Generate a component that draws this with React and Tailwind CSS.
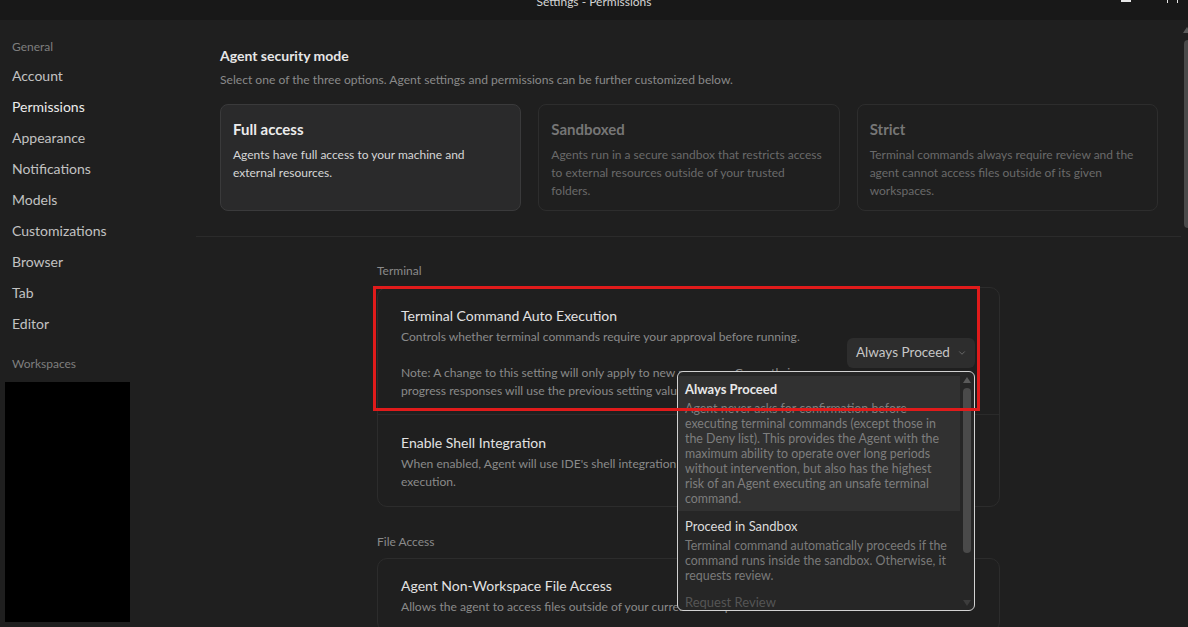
import React from 'react';
import { ChevronDown } from 'lucide-react';

const navItems = ['Account', 'Permissions', 'Appearance', 'Notifications', 'Models', 'Customizations', 'Browser', 'Tab', 'Editor'];

function ModeCard({ title, lines, active }) {
  return (
    <div
      className={
        active
          ? 'h-[107px] rounded-[8px] border border-[#3a3a3b] bg-[#2a2a2b] px-[12px] pt-[13px]'
          : 'h-[107px] rounded-[8px] border border-[#2d2d2d] px-[12px] pt-[13px]'
      }
    >
      <div className={active ? 'text-[15px] leading-[22px] font-bold text-[#ececec]' : 'text-[15px] leading-[22px] font-bold text-[#767676]'}>
        {title}
      </div>
      <div className={active ? 'mt-[6px] text-[12px] leading-[18px] text-[#d6d6d6]' : 'mt-[6px] text-[12px] leading-[18px] text-[#6a6a6a]'}>
        {lines.map((l) => (
          <div key={l} className="whitespace-nowrap">{l}</div>
        ))}
      </div>
    </div>
  );
}

export default function App() {
  return (
    <div className="relative flex h-[627px] w-[1188px] flex-col overflow-hidden bg-[#1f1f1f] font-[Lato,'Noto_Sans',sans-serif]">
      {/* title bar */}
      <div className="relative flex h-[20px] shrink-0 justify-center bg-[#181818]">
        <div className="-mt-[5px] text-[12px] leading-[14px] text-[#d4d4d4]">Settings - Permissions</div>
        <div className="absolute left-[1121px] top-0 h-[2px] w-[10px] bg-[#e6e6e6]" />
        <div className="absolute left-[1167px] top-0 h-[3px] w-px bg-[#e6e6e6]" />
        <div className="absolute left-[1177px] top-0 h-[3px] w-px bg-[#e6e6e6]" />
      </div>

      <div className="flex min-h-0 flex-1">
        {/* sidebar */}
        <div className="w-[196px] shrink-0 pt-[18px]">
          <div className="pl-[12px] text-[12px] leading-[18px] text-[#7e7e7e]">General</div>
          <div className="mt-[4px]">
            {navItems.map((n) => (
              <div
                key={n}
                className={
                  n === 'Permissions'
                    ? 'flex h-[31px] items-center pl-[12px] text-[14px] text-[#ececec]'
                    : 'flex h-[31px] items-center pl-[12px] text-[14px] text-[#c2c2c2]'
                }
              >
                {n}
              </div>
            ))}
          </div>
          <div className="mt-[16px] pl-[12px] text-[12px] leading-[18px] text-[#7e7e7e]">Workspaces</div>
          <div className="ml-[5px] mt-[9px] h-[240px] w-[125px] bg-black" />
        </div>

        {/* main */}
        <div className="relative min-w-0 flex-1 overflow-hidden">
          <div className="pr-[7px]">
            <div className="pl-[24px] pr-[23px] pt-[26px]">
              <div className="text-[14px] leading-[20px] font-bold text-[#e6e6e6]">Agent security mode</div>
              <div className="mt-[5px] whitespace-nowrap text-[12.1px] leading-[18px] text-[#8a8a8a]">
                Select one of the three options. Agent settings and permissions can be further customized below.
              </div>
              <div className="mt-[15px] grid grid-cols-3 gap-[17px]">
                <ModeCard active title="Full access" lines={['Agents have full access to your machine and', 'external resources.']} />
                <ModeCard
                  title="Sandboxed"
                  lines={['Agents run in a secure sandbox that restricts access', 'to external resources outside of your trusted', 'folders.']}
                />
                <ModeCard
                  title="Strict"
                  lines={['Terminal commands always require review and the', 'agent cannot access files outside of its given', 'workspaces.']}
                />
              </div>
            </div>
            <div className="mt-[25px] h-px bg-[#2b2b2b]" />

            <div className="mx-auto w-[623px] pt-[25px]">
              <div className="text-[12px] leading-[18px] text-[#8a8a8a]">Terminal</div>
              <div className="relative mt-[7px] rounded-[10px] border border-[#2c2c2c]">
                <div className="flex items-center justify-between border-b border-[#2a2a2a] pb-[14px] pl-[23px] pr-[24px] pt-[18px]">
                  <div>
                    <div className="text-[14px] leading-[20px] text-[#e2e2e2]">Terminal Command Auto Execution</div>
                    <div className="mt-[2px] whitespace-nowrap text-[12.1px] leading-[18px] text-[#8a8a8a]">
                      <div>Controls whether terminal commands require your approval before running.</div>
                      <div className="h-[18px]" />
                      <div>Note: A change to this setting will only apply to new messages. Currently in-</div>
                      <div>progress responses will use the previous setting value.</div>
                    </div>
                  </div>
                  <div className="-mt-[1px] flex h-[30px] w-[128px] shrink-0 items-center justify-between rounded-[6px] bg-[#2d2d2d] pl-[9px] pr-[8px]">
                    <span className="text-[13.5px] text-[#c6c6c6]">Always Proceed</span>
                    <ChevronDown size={10} strokeWidth={1.5} className="text-[#8a8a8a]" />
                  </div>
                </div>
                <div className="pb-[15px] pl-[23px] pr-[24px] pt-[18px]">
                  <div className="text-[14px] leading-[20px] text-[#e2e2e2]">Enable Shell Integration</div>
                  <div className="mt-[2px] whitespace-nowrap text-[12.1px] leading-[18px] text-[#8a8a8a]">
                    <div>When enabled, Agent will use IDE's shell integration for terminal command</div>
                    <div>execution.</div>
                  </div>
                </div>

                {/* dropdown menu */}
                <div className="absolute left-[299px] top-[83px] z-20 h-[240px] w-[298px] overflow-hidden rounded-[6px] border border-[#d2d2d2] bg-[#262626]">
                  <div className="pt-[4px]">
                    <div className="w-[282px] bg-[#313131] pb-[5px] pl-[7px] pt-[4px]">
                      <div className="text-[13px] leading-[18px] font-bold text-[#e8e8e8]">Always Proceed</div>
                      <div className="mt-[3px] whitespace-nowrap text-[12.4px] leading-[15px] text-[#7e7e7e]">
                        <div>Agent never asks for confirmation before</div>
                        <div>executing terminal commands (except those in</div>
                        <div>the Deny list). This provides the Agent with the</div>
                        <div>maximum ability to operate over long periods</div>
                        <div>without intervention, but also has the highest</div>
                        <div>risk of an Agent executing an unsafe terminal</div>
                        <div>command.</div>
                      </div>
                    </div>
                    <div className="w-[282px] pb-[4px] pl-[7px] pt-[6px]">
                      <div className="text-[13px] leading-[18px] text-[#dcdcdc]">Proceed in Sandbox</div>
                      <div className="mt-[3px] whitespace-nowrap text-[12.4px] leading-[15px] text-[#7a7a7a]">
                        <div>Terminal command automatically proceeds if the</div>
                        <div>command runs inside the sandbox. Otherwise, it</div>
                        <div>requests review.</div>
                      </div>
                    </div>
                    <div className="w-[282px] pl-[7px] pt-[6px]">
                      <div className="text-[13px] leading-[18px] text-[#555555]">Request Review</div>
                    </div>
                  </div>
                  {/* menu scrollbar */}
                  <div className="absolute left-[285px] top-[5px] h-0 w-0 border-x-[4px] border-b-[6px] border-x-transparent border-b-[#5a5a5a]" />
                  <div className="absolute left-[285px] top-[16px] h-[165px] w-[8px] rounded-full bg-[#4a4a4a]" />
                  <div className="absolute left-[285px] top-[228px] h-0 w-0 border-x-[4px] border-t-[6px] border-x-transparent border-t-[#3c3c3c]" />
                </div>

                {/* red highlight annotation */}
                <div className="pointer-events-none absolute -left-[5px] -top-[2px] z-30 h-[125px] w-[607px] border-[3px] border-[#e01b1b]" />
              </div>

              <div className="mt-[26px] text-[12px] leading-[18px] text-[#8a8a8a]">File Access</div>
              <div className="mt-[7px] rounded-[10px] border border-[#2c2c2c]">
                <div className="pb-[15px] pl-[23px] pr-[24px] pt-[17px]">
                  <div className="text-[14px] leading-[20px] text-[#e2e2e2]">Agent Non-Workspace File Access</div>
                  <div className="mt-[2px] whitespace-nowrap text-[12.1px] leading-[18px] text-[#8a8a8a]">
                    <div>Allows the agent to access files outside of your current workspace.</div>
                  </div>
                </div>
              </div>
            </div>
          </div>

          {/* main scrollbar */}
          <div className="absolute left-[987px] top-[7px] h-0 w-0 border-x-[4px] border-b-[6px] border-x-transparent border-b-[#5a5a5a]" />
          <div className="absolute left-[988px] top-[20px] h-[188px] w-[8px] rounded-full bg-[#4a4a4a]" />
        </div>
      </div>
    </div>
  );
}
